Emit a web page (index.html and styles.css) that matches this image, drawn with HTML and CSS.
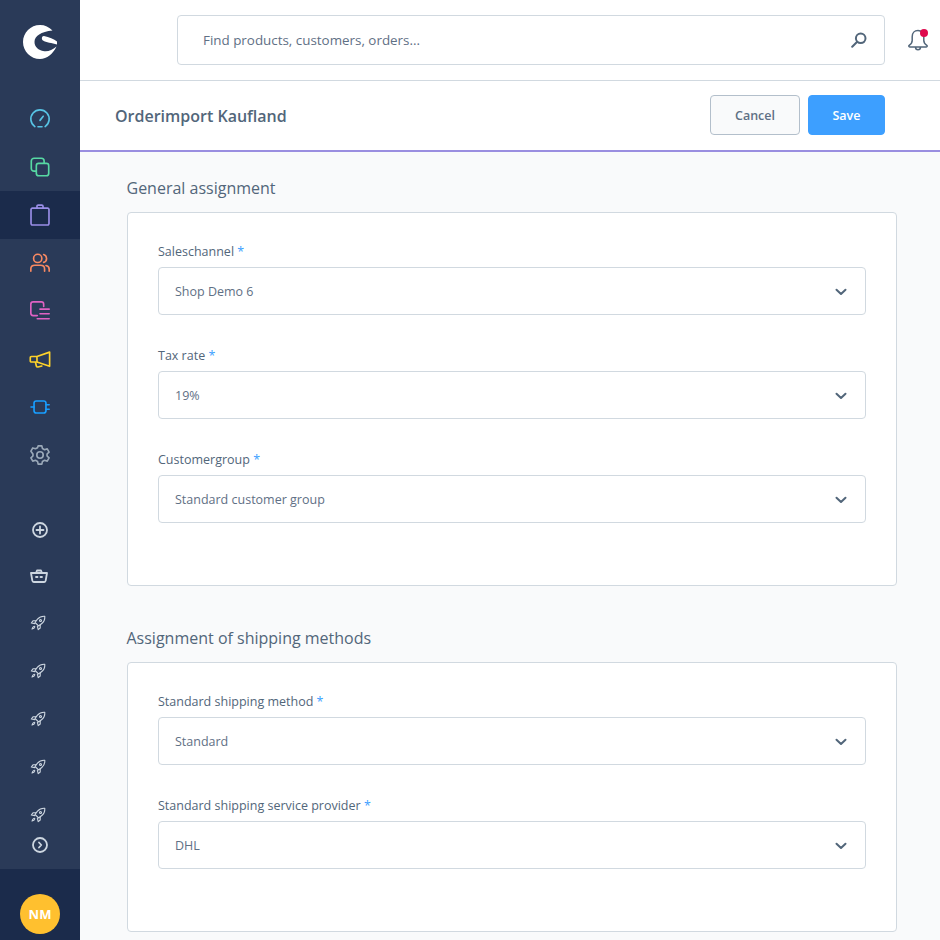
FILE: index.html
```html
<!DOCTYPE html>
<html lang="en">
<head>
    <meta charset="UTF-8">
    <title>Orderimport Kaufland</title>
    <link rel="stylesheet" href="styles.css">
</head>
<body>
    <svg class="sprites" width="0" height="0">
        <symbol id="rocket" viewBox="0 0 16 16">
            <path d="M14.800 1.200c-3.200-.2-5.600.9-7.300 3L5 7.400l3.600 3.600 3.200-2.500c2.100-1.700 3.200-4.100 3-7.300z"/>
            <path d="M5.800 5.800H3L1.300 8l3.700.6M10.200 9.800V13l-2 1.700-.8-3.400M4.200 11.200c-1.200.4-1.900 1.500-2.200 2.800 1.300-.3 2.400-1 2.800-2.200"/>
            <circle cx="10.500" cy="5.500" r="1"/>
        </symbol>
        <symbol id="chevron" viewBox="0 0 12 8">
            <path d="M1.500 1.700 6 6l4.500-4.300"/>
        </symbol>
    </svg>

    <aside class="sidebar">
        <div class="logo">
            <svg width="34" height="34" viewBox="0 0 34 34">
                <path fill="#fff" d="M29.500 5.500C26 2 22 0 17 0 7.600 0 0 7.600 0 17s7.600 17 17 17c7 0 13-5 16.500-12.500-4.500 4-9 5.500-13.500 4.500-5-1-8.500-4.500-8.500-9 0-6 6.500-10.500 18-11.500z"/>
                <path fill="#fff" d="M21 11c5 1 10 3 13 5.500v3c-5-1.500-11-2-14-4-2-1.500-1-5 1-4.500z"/>
            </svg>
        </div>
        <nav class="main-nav">
            <a class="nav-item">
                <svg width="24" height="24" viewBox="0 0 24 24" stroke="#57c4e5"><path d="M6.400 20.300a10 10 0 1 1 11.200 0M12 13.500l3.500-4.500M9.800 20.500h4.400"/></svg>
            </a>
            <a class="nav-item">
                <svg width="24" height="24" viewBox="0 0 24 24" stroke="#57d9a3"><rect x="2.500" y="2.500" width="14" height="14" rx="3"/><rect x="8" y="8" width="13.500" height="13.500" rx="2.500" fill="#2a3a58"/></svg>
            </a>
            <a class="nav-item active">
                <svg width="24" height="24" viewBox="0 0 24 24" stroke="#9a8ee8"><path d="M3.700 4.500h16.600a1.500 1.500 0 0 1 1.500 1.500v15.400a1.500 1.500 0 0 1-1.500 1.500H3.700a1.500 1.500 0 0 1-1.500-1.500V6a1.500 1.500 0 0 1 1.500-1.500zM8.700 4.500V2.500a1.300 1.300 0 0 1 1.300-1.300h4a1.300 1.300 0 0 1 1.300 1.300v2"/></svg>
            </a>
            <a class="nav-item">
                <svg width="24" height="24" viewBox="0 0 24 24" stroke="#f88962"><circle cx="9.500" cy="7" r="4.500"/><path d="M2 21v-2.500C2 16 4 14.500 6.500 14.500h6c2.500 0 4.500 1.500 4.500 4V21M16 2.700a4.500 4.500 0 0 1 0 8.600M18.500 14.700c2 .4 3.500 1.800 3.500 4V21"/></svg>
            </a>
            <a class="nav-item">
                <svg width="24" height="24" viewBox="0 0 24 24" stroke="#e062c3"><path d="M9 17H4.500A2.500 2.500 0 0 1 2 14.500v-10A2.500 2.500 0 0 1 4.500 2h9A2.500 2.500 0 0 1 16 4.500V7M12 10h10M12 15h10M9 20.500h13"/></svg>
            </a>
            <a class="nav-item">
                <svg width="24" height="24" viewBox="0 0 24 24" stroke="#ffd32a"><path d="M8.700 9.300 22.500 4.500V20L8.700 15.300zM8.700 9.300H2.600A1.200 1.200 0 0 0 1.400 10.500v3.600a1.200 1.200 0 0 0 1.200 1.200h6.100M7 15.300l1 4.300c.2.800 1 1.200 1.800 1.100l4.200-1.100"/></svg>
            </a>
            <a class="nav-item">
                <svg width="24" height="24" viewBox="0 0 24 24" stroke="#189eff"><rect x="5.500" y="5.500" width="13" height="13" rx="2.500"/><path d="M2.200 12h3.300M18.500 9.500H22M18.500 14.500H22"/></svg>
            </a>
            <a class="nav-item">
                <svg width="24" height="24" viewBox="0 0 24 24" stroke="#9aa8b8"><circle cx="12" cy="12" r="3.500"/><path d="M10 2h4l.7 3 2.200 1.200 3-.9 2 3.500-2.200 2.100v2.200l2.200 2.100-2 3.500-3-.9-2.200 1.200-.7 3h-4l-.7-3-2.200-1.200-3 .9-2-3.500 2.200-2.100v-2.200L2.100 7.800l2-3.500 3 .9L9.300 4z"/></svg>
            </a>
        </nav>
        <div class="plugin-nav">
            <a class="nav-item add-item">
                <svg width="16" height="16" viewBox="0 0 16 16" stroke="#cdd6e0"><circle cx="8" cy="8" r="7"/><path d="M8 4.500v7M4.500 8h7"/></svg>
            </a>
            <a class="nav-item basket-item">
                <svg width="18" height="16" viewBox="0 0 18 16" stroke="#cdd6e0" stroke-width="1.300"><path d="M1 5h16l-1.300 7.500c-.1.800-.7 1.500-1.500 1.500H3.800c-.8 0-1.400-.7-1.500-1.500zM6 5l1-2.500h4L12 5M6 9h1.500M10.500 9H12"/></svg>
            </a>
            <a class="nav-item"><svg class="rocket" width="16" height="16"><use href="#rocket"/></svg></a>
            <a class="nav-item"><svg class="rocket" width="16" height="16"><use href="#rocket"/></svg></a>
            <a class="nav-item"><svg class="rocket" width="16" height="16"><use href="#rocket"/></svg></a>
            <a class="nav-item"><svg class="rocket" width="16" height="16"><use href="#rocket"/></svg></a>
            <a class="nav-item"><svg class="rocket" width="16" height="16"><use href="#rocket"/></svg></a>
        </div>
        <div class="collapse">
            <svg width="16" height="16" viewBox="0 0 16 16" stroke="#cdd6e0" stroke-width="1.300"><circle cx="8" cy="8" r="7"/><path d="M7 5.500 9.300 8 7 10.500"/></svg>
        </div>
        <div class="user">
            <div class="avatar">NM</div>
        </div>
    </aside>

    <main class="main">
        <header class="topbar">
            <div class="search">
                <span>Find products, customers, orders...</span>
                <svg width="16" height="16" viewBox="0 0 16 16" stroke="#52667a"><circle cx="9.700" cy="6.300" r="4.800"/><path d="M6.200 9.800 1.200 14.800"/></svg>
            </div>
            <div class="bell">
                <svg width="22" height="24" viewBox="0 0 22 24" stroke="#52667a"><path d="M11 2.500c-3.500 0-5.800 2.800-5.800 6.200v3.800c0 2-1 3.500-3 4.800-.8.600-.4 1.700.5 1.700h16.600c.9 0 1.300-1.100.5-1.700-2-1.300-3-2.800-3-4.800V8.700c0-3.400-2.300-6.200-5.800-6.200zM8.500 19c0 1.600 1 2.800 2.500 2.800s2.500-1.200 2.500-2.800"/></svg>
                <span class="bell-dot"></span>
            </div>
        </header>

        <div class="smartbar">
            <h1>Orderimport Kaufland</h1>
            <div class="actions">
                <button class="btn btn-cancel">Cancel</button>
                <button class="btn btn-save">Save</button>
            </div>
        </div>

        <div class="content">
            <h2>General assignment</h2>
            <section class="card">
                <div class="field">
                    <label>Saleschannel <em>*</em></label>
                    <div class="select">Shop Demo 6<svg width="12" height="8"><use href="#chevron"/></svg></div>
                </div>
                <div class="field">
                    <label>Tax rate <em>*</em></label>
                    <div class="select">19%<svg width="12" height="8"><use href="#chevron"/></svg></div>
                </div>
                <div class="field">
                    <label>Customergroup <em>*</em></label>
                    <div class="select">Standard customer group<svg width="12" height="8"><use href="#chevron"/></svg></div>
                </div>
            </section>

            <h2>Assignment of shipping methods</h2>
            <section class="card">
                <div class="field">
                    <label>Standard shipping method <em>*</em></label>
                    <div class="select">Standard<svg width="12" height="8"><use href="#chevron"/></svg></div>
                </div>
                <div class="field">
                    <label>Standard shipping service provider <em>*</em></label>
                    <div class="select">DHL<svg width="12" height="8"><use href="#chevron"/></svg></div>
                </div>
            </section>
        </div>
    </main>
</body>
</html>
```

FILE: styles.css
```css
* {
    box-sizing: border-box;
}

html, body {
    height: 100%;
}

body {
    margin: 0;
    display: flex;
    overflow: hidden;
    font-family: "Open Sans", "Noto Sans", sans-serif;
    color: #52667a;
    background: #f9fafb;
}

.sprites {
    position: absolute;
}

svg {
    fill: none;
    stroke-width: 1.8;
    stroke-linecap: round;
    stroke-linejoin: round;
}

/* Sidebar */
.sidebar {
    flex: 0 0 80px;
    height: 100vh;
    display: flex;
    flex-direction: column;
    background: #2a3a58;
}

.logo {
    height: 95px;
    padding: 25px 0 0 23px;
}

.nav-item {
    height: 48px;
    display: flex;
    flex-shrink: 0;
    align-items: center;
    justify-content: center;
}

.nav-item.active {
    background: #1b2b4b;
}

.main-nav svg {
    width: 22px;
    height: 22px;
}

.plugin-nav {
    flex: 1;
    min-height: 0;
    margin-top: 29px;
    overflow: hidden;
}

.add-item {
    height: 44px;
}

.basket-item {
    height: 47px;
    padding-right: 2px;
}

.rocket {
    margin-right: 4px;
    stroke: #cdd6e0;
    stroke-width: 1.100;
}

.collapse {
    height: 24px;
    margin-bottom: 12px;
    display: flex;
    align-items: center;
    justify-content: center;
}

.user {
    height: 71px;
    padding-top: 25px;
    background: #1b2b4b;
}

.avatar {
    width: 40px;
    height: 40px;
    margin: 0 auto;
    border-radius: 50%;
    background: #ffc02f;
    color: #fff;
    font-size: 13px;
    font-weight: 700;
    line-height: 40px;
    text-align: center;
}

/* Main column */
.main {
    flex: 1;
    min-width: 0;
}

.topbar {
    height: 81px;
    display: flex;
    align-items: flex-start;
    padding: 15px 0 0 97px;
    background: #fff;
    border-bottom: 1px solid #d1d9e0;
}

.search {
    width: 708px;
    height: 50px;
    display: flex;
    align-items: center;
    justify-content: space-between;
    padding: 0 17px 0 25px;
    border: 1px solid #d1d9e0;
    border-radius: 4px;
    font-size: 13.400px;
    color: #5f7085;
}

.search svg {
    stroke-width: 2;
}

.bell {
    position: relative;
    margin: 13px 0 0 22px;
}

.bell svg {
    display: block;
    stroke-width: 1.500;
}

.bell-dot {
    position: absolute;
    top: 1px;
    left: 13px;
    width: 8px;
    height: 8px;
    border-radius: 50%;
    background: #de0a4d;
}

.smartbar {
    height: 71px;
    display: flex;
    align-items: center;
    justify-content: space-between;
    padding: 0 55px 2px 35px;
    background: #fff;
    border-bottom: 2px solid #9a8ee0;
}

.smartbar h1 {
    margin: 2px 0 0;
    font-size: 16px;
    font-weight: 600;
}

.actions {
    display: flex;
    gap: 8px;
}

.btn {
    height: 40px;
    padding: 2px 0 0;
    border-radius: 4px;
    font-family: inherit;
    font-size: 12.500px;
    font-weight: 600;
}

.btn-cancel {
    width: 90px;
    border: 1px solid #b3bfcb;
    background: #f9fafb;
    color: #5f7085;
}

.btn-save {
    width: 77px;
    border: 1px solid #3d9fff;
    background: #3d9fff;
    color: #fff;
}

/* Form */
.content {
    padding: 24px 43px 0 47px;
}

.content h2 {
    height: 24px;
    margin: 0 0 12px -.5px;
    font-size: 16px;
    font-weight: 400;
    line-height: 24px;
}

.card {
    margin-bottom: 40px;
    padding: 30px 30px 30px;
    background: #fff;
    border: 1px solid #d1d9e0;
    border-radius: 4px;
}

.field {
    margin-bottom: 32px;
}

.field label {
    display: block;
    height: 16px;
    margin-bottom: 8px;
    font-size: 12.500px;
    line-height: 18px;
}

.field em {
    color: #3d9fff;
    font-style: normal;
}

.select {
    height: 48px;
    display: flex;
    align-items: center;
    justify-content: space-between;
    padding: 0 18px 0 16px;
    border: 1px solid #d1d9e0;
    border-radius: 4px;
    font-size: 12.500px;
    color: #5f7085;
}

.select svg {
    margin-top: 2px;
    stroke: #52667a;
    stroke-width: 2;
}
```
